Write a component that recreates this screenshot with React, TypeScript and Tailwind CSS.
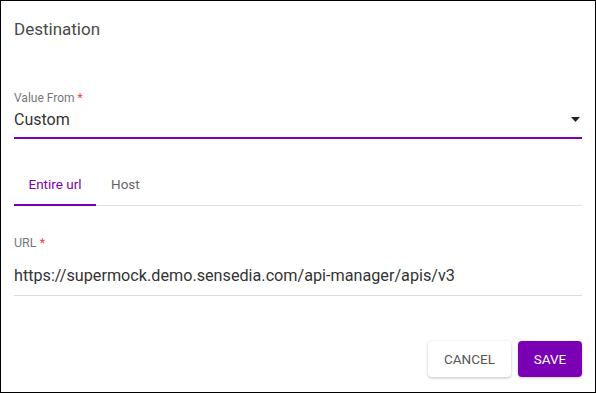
import React from "react";

export default function App() {
  return (
    <div
      className="w-[596px] h-[393px] border border-black bg-white box-border flex flex-col px-[13px]"
      style={{ fontFamily: "Roboto, 'Liberation Sans', sans-serif" }}
    >
      <div className="pt-[16px] text-[17px] leading-[24px] text-[#4a4a4a]">Destination</div>

      <div className="mt-[49px] text-[12px] leading-[16px] text-[#777]">
        Value From <span className="text-[#f44336]">*</span>
      </div>
      <div className="relative h-[31px] border-b-2 border-[#7b00b5] box-content">
        <div className="pt-[2px] text-[16px] leading-[24px] text-[#333]">Custom</div>
        <svg className="absolute right-[2px] top-[11px]" width="9" height="5" viewBox="0 0 9 5">
          <path d="M0 0 L9 0 L4.5 5 Z" fill="#222" />
        </svg>
      </div>

      <div className="mt-[19px] flex h-[47px] border-b border-[#e0e0e0] box-content -mb-px">
        <div className="relative w-[82px] flex justify-center pt-[16px] text-[13.5px] leading-[20px] text-[#7b00b5]">
          Entire url
          <div className="absolute left-0 right-0 bottom-[-1px] h-[2px] bg-[#7b00b5]" />
        </div>
        <div className="pl-[15px] pt-[16px] text-[13.5px] leading-[20px] text-[#666]">Host</div>
      </div>

      <div className="mt-[30px] text-[12.5px] leading-[16px] text-[#777]">
        URL <span className="text-[#f44336]">*</span>
      </div>
      <div className="h-[44px] border-b border-[#dcdcdc] box-content">
        <div className="pt-[13px] text-[16.2px] leading-[24px] text-[#333]">
          https://supermock.demo.sensedia.com/api-manager/apis/v3
        </div>
      </div>

      <div className="mt-[45px] flex justify-end gap-[7px]">
        <button className="w-[83px] h-[36px] rounded-[4px] bg-white text-[13.5px] text-[#555] uppercase shadow-[0_1px_3px_rgba(0,0,0,0.25)]">
          Cancel
        </button>
        <button className="w-[64px] h-[36px] rounded-[4px] bg-[#7b00b5] text-[13.5px] text-white uppercase shadow-[0_1px_3px_rgba(0,0,0,0.2)]">
          Save
        </button>
      </div>
    </div>
  );
}
